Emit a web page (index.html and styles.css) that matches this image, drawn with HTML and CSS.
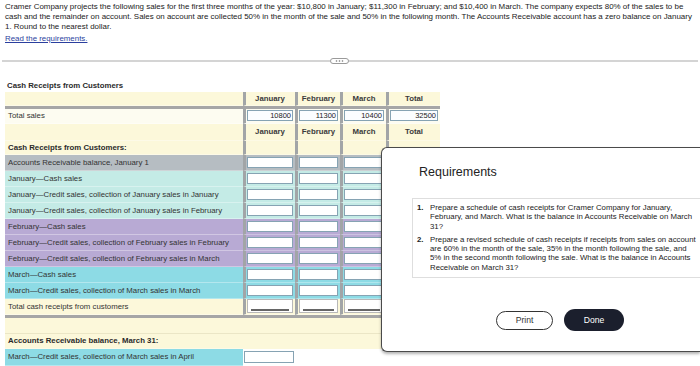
FILE: index.html
```html
<!DOCTYPE html>
<html lang="en">
<head>
<meta charset="utf-8">
<title>Cash Receipts from Customers</title>
<link rel="stylesheet" href="styles.css">
</head>
<body>
<div class="page">
  <p class="intro">Cramer Company projects the following sales for the first three months of the year: $10,800 in January; $11,300 in February; and $10,400 in March. The company expects 80% of the sales to be cash and the remainder on account. Sales on account are collected 50% in the month of the sale and 50% in the following month. The Accounts Receivable account has a zero balance on January 1. Round to the nearest dollar.</p>
  <a class="req-link" href="#">Read the requirements.</a>
  <div class="divider">
    <span class="line line-left"></span>
    <svg class="pill" width="19" height="6" viewBox="0 0 19 6"><rect x="0.5" y="0.5" width="18" height="5" rx="2.5" fill="#fff" stroke="#9a9a9a"/><circle cx="6.5" cy="3" r="0.8" fill="#777"/><circle cx="9.5" cy="3" r="0.8" fill="#777"/><circle cx="12.5" cy="3" r="0.8" fill="#777"/></svg>
    <span class="line line-right"></span>
  </div>
  <div class="sched-title">Cash Receipts from Customers</div>
  <div class="sched">
    <div class="row cream head head-top">
      <div class="lab"></div>
      <div class="num hd">January</div><div class="num hd">February</div><div class="num hd">March</div><div class="num hd">Total</div>
    </div>
    <div class="row light sales">
      <div class="lab">Total sales</div>
      <div class="num"><span class="inp val">10800</span></div>
      <div class="num"><span class="inp val">11300</span></div>
      <div class="num"><span class="inp val">10400</span></div>
      <div class="num"><span class="inp val">32500</span></div>
    </div>
    <div class="row cream head head-2">
      <div class="lab"></div>
      <div class="num hd">January</div><div class="num hd">February</div><div class="num hd">March</div><div class="num hd">Total</div>
    </div>
    <div class="row cream sub">
      <div class="lab bold">Cash Receipts from Customers:</div>
      <div class="num"></div><div class="num"></div><div class="num"></div><div class="num"></div>
    </div>
    <div class="row gray">
      <div class="lab">Accounts Receivable balance, January 1</div>
      <div class="num"><span class="inp"></span></div><div class="num"><span class="inp"></span></div><div class="num"><span class="inp"></span></div><div class="num"><span class="inp"></span></div>
    </div>
    <div class="row teal">
      <div class="lab">January—Cash sales</div>
      <div class="num"><span class="inp"></span></div><div class="num"><span class="inp"></span></div><div class="num"><span class="inp"></span></div><div class="num"><span class="inp"></span></div>
    </div>
    <div class="row teal">
      <div class="lab">January—Credit sales, collection of January sales in January</div>
      <div class="num"><span class="inp"></span></div><div class="num"><span class="inp"></span></div><div class="num"><span class="inp"></span></div><div class="num"><span class="inp"></span></div>
    </div>
    <div class="row teal">
      <div class="lab">January—Credit sales, collection of January sales in February</div>
      <div class="num"><span class="inp"></span></div><div class="num"><span class="inp"></span></div><div class="num"><span class="inp"></span></div><div class="num"><span class="inp"></span></div>
    </div>
    <div class="row purple">
      <div class="lab">February—Cash sales</div>
      <div class="num"><span class="inp"></span></div><div class="num"><span class="inp"></span></div><div class="num"><span class="inp"></span></div><div class="num"><span class="inp"></span></div>
    </div>
    <div class="row purple">
      <div class="lab">February—Credit sales, collection of February sales in February</div>
      <div class="num"><span class="inp"></span></div><div class="num"><span class="inp"></span></div><div class="num"><span class="inp"></span></div><div class="num"><span class="inp"></span></div>
    </div>
    <div class="row purple">
      <div class="lab">February—Credit sales, collection of February sales in March</div>
      <div class="num"><span class="inp"></span></div><div class="num"><span class="inp"></span></div><div class="num"><span class="inp"></span></div><div class="num"><span class="inp"></span></div>
    </div>
    <div class="row cyan">
      <div class="lab">March—Cash sales</div>
      <div class="num"><span class="inp"></span></div><div class="num"><span class="inp"></span></div><div class="num"><span class="inp"></span></div><div class="num"><span class="inp"></span></div>
    </div>
    <div class="row cyan">
      <div class="lab">March—Credit sales, collection of March sales in March</div>
      <div class="num"><span class="inp"></span></div><div class="num"><span class="inp"></span></div><div class="num"><span class="inp"></span></div><div class="num"><span class="inp"></span></div>
    </div>
    <div class="row cream total">
      <div class="lab">Total cash receipts from customers</div>
      <div class="num"><span class="inp tot"></span></div><div class="num"><span class="inp tot"></span></div><div class="num"><span class="inp tot"></span></div><div class="num"><span class="inp tot"></span></div>
    </div>
    <div class="row cream blank"></div>
    <div class="row cream ar">
      <div class="lab bold">Accounts Receivable balance, March 31:</div>
    </div>
    <div class="row last">
      <div class="lab cyan">March—Credit sales, collection of March sales in April</div>
      <div class="plain"><span class="inp"></span></div>
    </div>
  </div>
</div>

<div class="modal">
  <h3 class="modal-title">Requirements</h3>
  <div class="req-box">
    <div class="item"><span class="n">1.</span><span class="t">Prepare a schedule of cash receipts for Cramer Company for January, February, and March. What is the balance in Accounts Receivable on March 31?</span></div>
    <div class="item"><span class="n">2.</span><span class="t">Prepare a revised schedule of cash receipts if receipts from sales on account are 60% in the month of the sale, 35% in the month following the sale, and 5% in the second month following the sale. What is the balance in Accounts Receivable on March 31?</span></div>
  </div>
  <div class="actions">
    <button class="btn btn-print" type="button">Print</button>
    <button class="btn btn-done" type="button">Done</button>
  </div>
</div>
</body>
</html>
```
FILE: styles.css
```css
* { box-sizing: border-box; }
html, body {
  margin: 0;
  padding: 0;
  overflow: hidden;
  background: #fff;
}
body {
  width: 700px;
  height: 366px;
  position: relative;
  font-family: "Liberation Sans", Arial, sans-serif;
  color: #222;
}
.page { padding: 2px 5px 0 5px; }

.intro {
  margin: 0;
  width: 689px;
  font-size: 7.95px;
  line-height: 9.8px;
  color: #222;
}
.req-link {
  display: block;
  margin-top: 2.6px;
  font-size: 7.9px;
  line-height: 10px;
  color: #2b3f9e;
  text-decoration: underline;
  width: max-content;
}

.divider {
  display: flex;
  align-items: center;
  margin: 14px -3px 0 -3px;
  height: 6px;
}
.line { height: 2px; background: #d4d4d4; }
.line-left { width: 328px; }
.line-right { flex: 1; }
.pill { display: block; flex: none; }

.sched-title {
  margin: 17px 0 0 2px;
  font-size: 7.8px;
  line-height: 10px;
  font-weight: bold;
  color: #2a2a2a;
}

.sched { width: 435px; margin-top: 1px; font-size: 7.8px; color: #333; }
.row {
  display: grid;
  grid-template-columns: 238px 52px 45px 46px 54px;
  height: 16px;
}
.lab {
  display: flex;
  align-items: center;
  padding-left: 3px;
  white-space: nowrap;
  border-bottom: 1px solid rgba(255,255,255,0.35);
}
.bold { font-weight: bold; color: #2a2a2a; }
.num {
  display: flex;
  align-items: center;
  justify-content: center;
  border-left: 3px solid #a2a5a7;
  padding: 0 2px 0 1px;
  border-bottom: 1px solid rgba(255,255,255,0.3);
}
.hd { font-weight: bold; color: #3a3a3a; }

.cream { background: #fcf8da; }
.light { background: #fdfcf1; }
.gray { background: #b6bdc2; }
.teal { background: #c4ebe6; }
.purple { background: #b8aad4; }
.cyan { background: #8ddbe5; }

.head-top { height: 17px; border-bottom: 3px solid #a6a6a6; }
.sales { height: 15px; }
.head-2 { height: 17px; }
.sub { height: 14px; }
.total { height: 19px; border-bottom: 3px solid #a6a6a6; }
.blank { height: 15px; display: block; }
.ar { height: 16px; border-top: 1px solid #ebe6c6; }
.last { height: 17px; }

.inp {
  display: block;
  width: 100%;
  height: 11px;
  border: 1px solid #86a3b3;
  background: #fff;
}
.val {
  text-align: right;
  font-size: 7.5px;
  line-height: 9px;
  padding-right: 1px;
  color: #222;
  background: #fbfdff;
}
.tot {
  height: 14px;
  border-color: #b8b8b8;
  padding: 9px 3px 0 3px;
}
.tot::after {
  content: "";
  display: block;
  height: 2px;
  background: #666;
}
.plain {
  display: flex;
  align-items: center;
  padding: 0 1px 0 1px;
  background: #fff;
}
.plain .inp { height: 12px; }

.modal {
  position: absolute;
  left: 381px;
  top: 147px;
  width: 319px;
  height: 205px;
  background: #fff;
  border: 1px solid #4a4a4a;
  border-right: none;
  border-radius: 6px 0 0 6px;
  box-shadow: 0 2px 3px rgba(0,0,0,0.3);
  padding: 17px 0 0 30px;
}
.modal-title {
  margin: 0 0 0 7px;
  font-size: 12.5px;
  line-height: 15px;
  font-weight: normal;
  color: #222;
}
.req-box {
  margin-top: 18px;
  height: 80px;
  border: 1px solid #dedede;
  border-right: none;
  padding: 4px 1px 0 4px;
  font-size: 7.8px;
  line-height: 9.3px;
  color: #222;
}
.item { display: flex; margin-bottom: 4px; }
.n { flex: none; width: 13px; font-weight: bold; }
.t { flex: 1; }

.actions {
  display: flex;
  align-items: center;
  gap: 11px;
  margin-top: 31px;
  padding-left: 84px;
}
.btn {
  font-family: "Liberation Sans", Arial, sans-serif;
  font-size: 8.6px;
  padding: 0;
  cursor: pointer;
}
.btn-print {
  width: 57px;
  height: 19px;
  border: 1px solid #333;
  border-radius: 10px;
  background: #fff;
  color: #333;
}
.btn-done {
  width: 60px;
  height: 22px;
  border: none;
  border-radius: 11px;
  background: #1b1f2d;
  color: #fff;
}
```
